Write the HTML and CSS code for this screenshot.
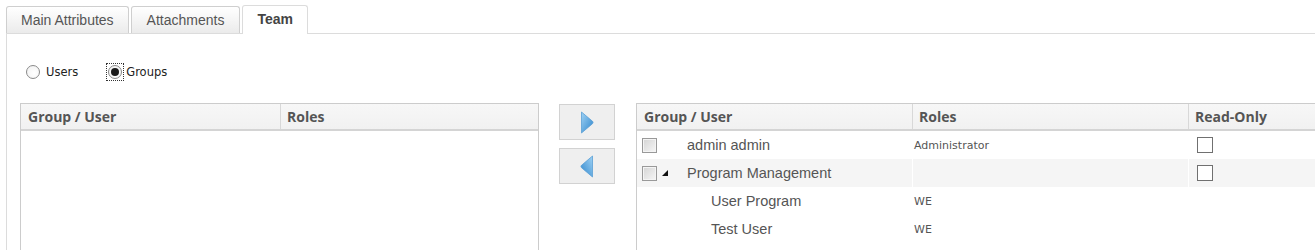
FILE: index.html
```html
<!DOCTYPE html>
<html>
<head>
<meta charset="utf-8">
<link rel="stylesheet" href="styles.css">
</head>
<body>
<div class="tabs">
  <div class="tab">Main Attributes</div>
  <div class="tab">Attachments</div>
  <div class="tab active">Team</div>
</div>
<div class="panel">
  <div class="radios">
    <label class="radio"><span class="circle"></span><span class="rlabel">Users</span></label>
    <label class="radio groups"><span class="focus"><span class="circle checked"></span></span><span class="rlabel">Groups</span></label>
  </div>
  <div class="lists">
    <div class="grid left">
      <div class="head">
        <div class="hc">Group / User</div>
        <div class="hc">Roles</div>
      </div>
    </div>
    <div class="moves">
      <button class="move">
        <svg width="14" height="23" viewBox="0 0 14 23">
          <defs>
            <linearGradient id="gr" x1="0" y1="0" x2="1" y2="1">
              <stop offset="0" stop-color="#9fd2f4"/>
              <stop offset="1" stop-color="#2f86cc"/>
            </linearGradient>
          </defs>
          <path d="M1.5 1 L12.5 10.3 Q13.6 11.5 12.5 12.7 L1.5 22 Z" fill="url(#gr)" stroke="#5a9fd6" stroke-width="0.8" stroke-linejoin="round"/>
        </svg>
      </button>
      <button class="move">
        <svg width="14" height="23" viewBox="0 0 14 23">
          <defs>
            <linearGradient id="gl" x1="1" y1="0" x2="0" y2="1">
              <stop offset="0" stop-color="#9fd2f4"/>
              <stop offset="1" stop-color="#2f86cc"/>
            </linearGradient>
          </defs>
          <path d="M12.5 1 L1.5 10.3 Q0.4 11.5 1.5 12.7 L12.5 22 Z" fill="url(#gl)" stroke="#5a9fd6" stroke-width="0.8" stroke-linejoin="round"/>
        </svg>
      </button>
    </div>
    <div class="grid right">
      <div class="head">
        <div class="hc">Group / User</div>
        <div class="hc">Roles</div>
        <div class="hc">Read-Only</div>
      </div>
      <div class="row">
        <div class="cell name"><span class="cb"></span><span class="tree"></span><span class="txt">admin admin</span></div>
        <div class="cell role">Administrator</div>
        <div class="cell ro"><span class="rocb"></span></div>
      </div>
      <div class="row alt">
        <div class="cell name"><span class="cb"></span><span class="tree"><svg width="6" height="6" viewBox="0 0 6 6"><polygon points="0,6 6,0 6,6" fill="#111"/></svg></span><span class="txt">Program Management</span></div>
        <div class="cell role"></div>
        <div class="cell ro"><span class="rocb"></span></div>
      </div>
      <div class="row">
        <div class="cell name child"><span class="txt">User Program</span></div>
        <div class="cell role">WE</div>
        <div class="cell ro"></div>
      </div>
      <div class="row">
        <div class="cell name child"><span class="txt">Test User</span></div>
        <div class="cell role">WE</div>
        <div class="cell ro"></div>
      </div>
    </div>
  </div>
</div>
</body>
</html>
```
FILE: styles.css
```css
html, body {
  margin: 0;
  padding: 0;
  background: #fff;
  overflow: hidden;
  height: 250px;
}
body {
  font-family: "Liberation Sans", Arial, sans-serif;
  color: #555;
}
.tabs {
  display: flex;
  align-items: flex-end;
  padding: 5px 0 0 6px;
  gap: 2px;
  height: 28px;
  box-sizing: content-box;
}
.tab {
  height: 27px;
  box-sizing: border-box;
  padding: 0 14px;
  border: 1px solid #cfcfcf;
  border-bottom: none;
  border-radius: 3px 3px 0 0;
  background: linear-gradient(#ffffff, #ebebeb);
  font-size: 14px;
  line-height: 26px;
  color: #555;
  flex: none;
}
.tab:nth-child(2) { padding: 0 15px 0 15px; }
.tab.active {
  height: 29px;
  margin-bottom: -1px;
  background: #fff;
  border-color: #dcdcdc;
  font-weight: bold;
  color: #444;
  line-height: 27px;
  position: relative;
  z-index: 1;
  padding: 0 14px 0 14px;
}
.panel {
  margin-left: 6px;
  border-top: 1px solid #dcdcdc;
  border-left: 1px solid #dcdcdc;
  height: 230px;
  padding-left: 13px;
}
.radios {
  display: flex;
  align-items: center;
  height: 22px;
  margin-top: 27px;
  padding-left: 6px;
  font-family: "DejaVu Sans", Verdana, sans-serif;
  font-size: 11.5px;
  color: #222;
}
.radio {
  display: inline-flex;
  align-items: center;
}
.circle {
  width: 14px;
  height: 14px;
  box-sizing: border-box;
  border: 1px solid #8a8a8a;
  border-radius: 50%;
  background: radial-gradient(circle at 60% 60%, #ffffff, #f0f0f0);
  display: inline-flex;
  align-items: center;
  justify-content: center;
}
.circle.checked::after {
  content: "";
  width: 8px;
  height: 8px;
  border-radius: 50%;
  background: #1a1a1a;
}
.radio .rlabel { margin-left: 6px; }
.groups { margin-left: 28px; }
.groups .rlabel { margin-left: 2px; }
.focus {
  display: inline-flex;
  padding: 1px;
  border: 1px dotted #333;
}
.lists {
  display: flex;
  align-items: flex-start;
  margin-top: 20px;
}
.grid {
  border: 1px solid #cccccc;
  height: 200px;
  box-sizing: border-box;
  flex: none;
}
.grid.left {
  width: 519px;
}
.grid.right {
  width: 720px;
}
.head {
  display: grid;
  height: 27px;
  box-sizing: border-box;
  background: linear-gradient(#f7f7f7, #f1f1f1);
  border-bottom: 2px solid #d4d4d4;
  font-family: "Open Sans", sans-serif;
  font-weight: bold;
  font-size: 14px;
  color: #555;
}
.left .head { grid-template-columns: 259px 1fr; }
.right .head, .right .row { grid-template-columns: 275px 276px 1fr; }
.hc {
  padding-left: 7px;
  line-height: 25px;
  white-space: nowrap;
}
.hc + .hc {
  border-left: 1px solid #d8d8d8;
  padding-left: 6px;
}
.moves {
  display: flex;
  flex-direction: column;
  gap: 8px;
  margin: 1px 21px 0 20px;
  flex: none;
}
.move {
  width: 56px;
  height: 36px;
  padding: 0;
  margin: 0;
  border: 1px solid #d2d2d2;
  background: #efefef;
  display: flex;
  align-items: center;
  justify-content: center;
}
.move svg { display: block; }
.row {
  display: grid;
  height: 28px;
  align-items: center;
}
.row.alt { background: #f5f5f5; }
.cell {
  height: 100%;
  display: flex;
  align-items: center;
  white-space: nowrap;
}
.cell + .cell { border-left: 1px solid transparent; }
.row.alt .cell + .cell { border-left-color: #ffffff; }
.name {
  padding-left: 5px;
  font-size: 14.5px;
  color: #555;
}
.name.child { padding-left: 74px; }
.cb {
  width: 15px;
  height: 15px;
  box-sizing: border-box;
  border: 1px solid #999;
  background: linear-gradient(135deg, #d4d4d4, #f6f6f6);
  box-shadow: inset 0 0 0 1px #f4f4f4;
}
.tree {
  width: 30px;
  display: flex;
  align-items: center;
  padding-left: 5px;
  box-sizing: border-box;
}
.tree svg { display: block; }
.role {
  padding-left: 1px;
  font-family: "DejaVu Sans", Verdana, sans-serif;
  font-size: 11px;
  color: #555;
}
.ro { padding-left: 8px; }
.rocb {
  width: 16px;
  height: 16px;
  box-sizing: border-box;
  border: 1px solid #707070;
  background: #fff;
}
```
